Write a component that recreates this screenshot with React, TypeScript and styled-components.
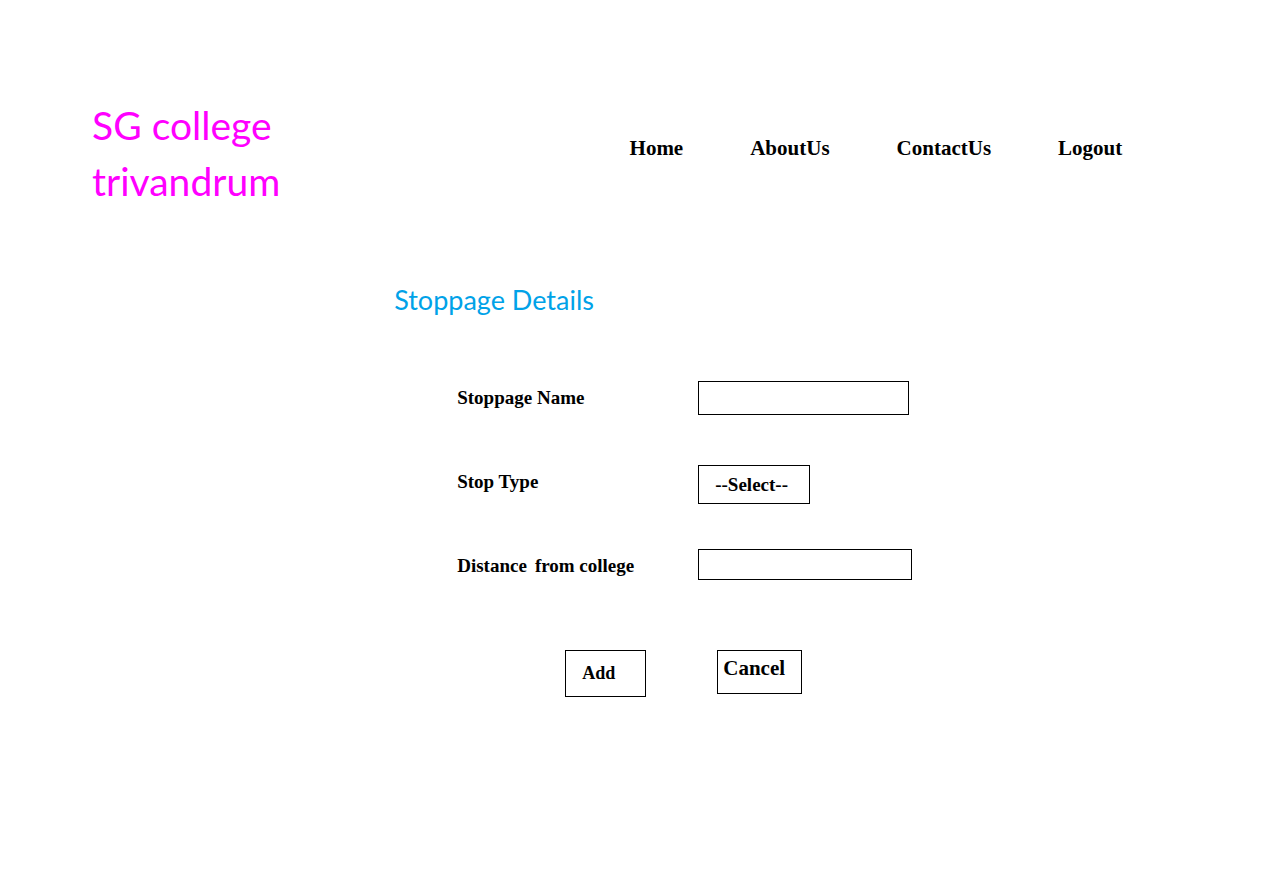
import React from "react";
import styled, { createGlobalStyle } from "styled-components";

const GlobalStyle = createGlobalStyle`
  *, *::before, *::after { box-sizing: border-box; }
  body {
    margin: 0;
    background: #fff;
    color: #000;
    font-family: "Times New Roman", "Liberation Serif", serif;
    font-weight: 700;
  }
`;

const Page = styled.div`
  padding: 97px 92px 48px;
`;

const Header = styled.header`
  display: grid;
  grid-template-columns: 49% 1fr;
`;

const Brand = styled.p`
  margin: 0;
  max-width: 240px;
  color: #ff00ff;
  font-family: "Tempus Sans ITC", Lato, sans-serif;
  font-size: 39px;
  font-weight: 400;
  line-height: 56px;
`;

const Nav = styled.nav`
  display: flex;
  align-items: flex-start;
  gap: 67px;
  padding: 39px 0 0 1px;
`;

const NavLink = styled.a`
  color: inherit;
  font-size: 21px;
  line-height: 24px;
  text-decoration: none;
`;

const Main = styled.main`
  padding: 73px 0 0 27.6%;
`;

const Title = styled.h1`
  margin: 0;
  color: #00a2e8;
  font-family: "Tempus Sans ITC", Lato, sans-serif;
  font-size: 27px;
  font-weight: 400;
  line-height: 36px;
`;

const Form = styled.form`
  padding: 63px 0 0 63px;
`;

const Fields = styled.div`
  display: grid;
  grid-auto-rows: 84px;
`;

const Field = styled.div`
  display: grid;
  grid-template-columns: 241px 1fr;
  align-items: start;
`;

const Label = styled.label`
  display: flex;
  gap: 8px;
  font-size: 19px;
  line-height: 34px;
`;

const TextBox = styled.input<{ $width: number; $height: number }>`
  width: ${(p) => p.$width}px;
  height: ${(p) => p.$height}px;
  padding: 0 8px;
  border: 1px solid #000;
  border-radius: 0;
  background: #fff;
  font: inherit;
  font-size: 19px;
`;

const Select = styled.select`
  appearance: none;
  width: 112px;
  height: 39px;
  padding: 0 16px;
  border: 1px solid #000;
  border-radius: 0;
  background: #fff;
  color: inherit;
  font: inherit;
  font-size: 19px;
`;

const Actions = styled.div`
  display: flex;
  align-items: flex-start;
  gap: 71px;
  padding: 17px 0 0 108px;
`;

const Button = styled.button<{ $width: number; $height: number; $size: number; $padding: string }>`
  width: ${(p) => p.$width}px;
  height: ${(p) => p.$height}px;
  padding: ${(p) => p.$padding};
  border: 1px solid #000;
  background: #fff;
  color: inherit;
  font: inherit;
  font-size: ${(p) => p.$size}px;
  text-align: left;
  cursor: pointer;
`;

const links = ["Home", "AboutUs", "ContactUs", "Logout"];

export default function App() {
  return (
    <>
      <GlobalStyle />
      <Page>
        <Header>
          <Brand>
            SG college
            <br />
            trivandrum
          </Brand>
          <Nav>
            {links.map((name) => (
              <NavLink key={name} href={`#${name.toLowerCase()}`}>
                {name}
              </NavLink>
            ))}
          </Nav>
        </Header>
        <Main>
          <Title>Stoppage Details</Title>
          <Form onSubmit={(e) => e.preventDefault()}>
            <Fields>
              <Field>
                <Label htmlFor="stoppage-name">Stoppage Name</Label>
                <TextBox id="stoppage-name" type="text" $width={211} $height={34} />
              </Field>
              <Field>
                <Label htmlFor="stop-type">Stop Type</Label>
                <Select id="stop-type">
                  <option>--Select--</option>
                </Select>
              </Field>
              <Field>
                <Label htmlFor="distance">
                  <span>Distance</span>
                  <span>from college</span>
                </Label>
                <TextBox id="distance" type="text" $width={214} $height={31} />
              </Field>
            </Fields>
            <Actions>
              <Button type="submit" $width={81} $height={47} $size={18} $padding="0 16px">
                Add
              </Button>
              <Button type="button" $width={85} $height={44} $size={21} $padding="0 5px 8px">
                Cancel
              </Button>
            </Actions>
          </Form>
        </Main>
      </Page>
    </>
  );
}
